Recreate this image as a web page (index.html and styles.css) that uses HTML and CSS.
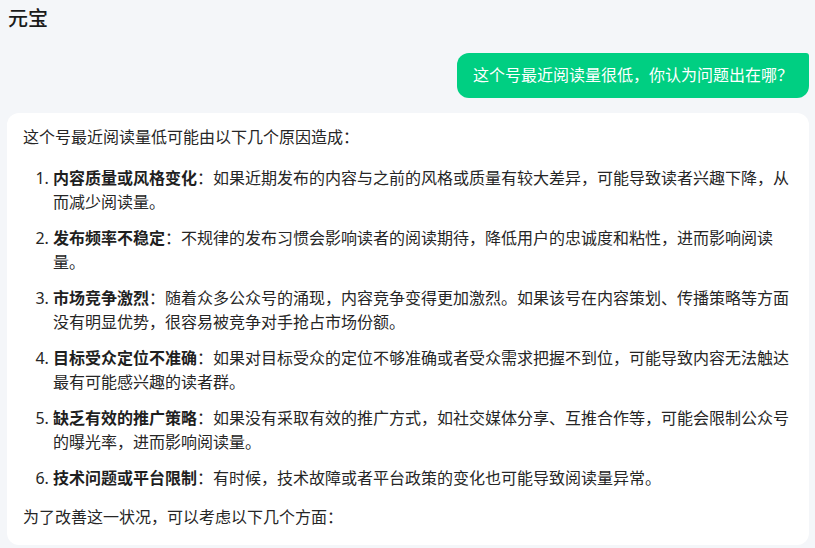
FILE: index.html
```html
<!DOCTYPE html>
<html lang="zh-CN">
<head>
<meta charset="UTF-8" />
<meta name="viewport" content="width=device-width, initial-scale=1" />
<title>元宝</title>
<link rel="stylesheet" href="styles.css">
</head>
<body>

<!-- Header -->
<div class="topBar">元宝</div>

<!-- Chat -->
<div class="chat">
  <div class="userRow">
    <div class="userBubble">这个号最近阅读量很低，你认为问题出在哪？</div>
  </div>

  <div class="answerCard">
    <p>这个号最近阅读量低可能由以下几个原因造成：</p>
    <ol class="reasons">
      <li><strong>内容质量或风格变化</strong>：如果近期发布的内容与之前的风格或质量有较大差异，可能导致读者兴趣下降，从而减少阅读量。</li>
      <li><strong>发布频率不稳定</strong>：不规律的发布习惯会影响读者的阅读期待，降低用户的忠诚度和粘性，进而影响阅读量。</li>
      <li><strong>市场竞争激烈</strong>：随着众多公众号的涌现，内容竞争变得更加激烈。如果该号在内容策划、传播策略等方面没有明显优势，很容易被竞争对手抢占市场份额。</li>
      <li><strong>目标受众定位不准确</strong>：如果对目标受众的定位不够准确或者受众需求把握不到位，可能导致内容无法触达最有可能感兴趣的读者群。</li>
      <li><strong>缺乏有效的推广策略</strong>：如果没有采取有效的推广方式，如社交媒体分享、互推合作等，可能会限制公众号的曝光率，进而影响阅读量。</li>
      <li><strong>技术问题或平台限制</strong>：有时候，技术故障或者平台政策的变化也可能导致阅读量异常。</li>
    </ol>
    <p>为了改善这一状况，可以考虑以下几个方面：</p>
  </div>
</div>

</body>
</html>
```

FILE: styles.css
```css
body {
  margin: 0;
  background: #f4f6f9;
  color: #262626;
  font-family: "Noto Sans", "Noto Sans CJK SC", sans-serif;
  overflow: hidden;
}

/* Header */
.topBar {
  padding: 8px 8px 0 8px;
  font-size: 20px;
  line-height: 22px;
  font-weight: 500;
  color: #1a1a1a;
}

/* Chat area */
.chat {
  padding: 0 6px 0 7px;
}
.userRow {
  display: flex;
  justify-content: flex-end;
  margin-top: 23px;
}
.userBubble {
  background: #00cf82;
  color: white;
  font-size: 16px;
  line-height: 25px;
  padding: 10px 16px;
  border-radius: 12px 3px 12px 12px;
}

/* Answer card */
.answerCard {
  background: white;
  margin-top: 15px;
  border-radius: 12px;
  padding: 12px 16px 16px 16px;
  font-size: 16px;
  line-height: 24px;
}
.answerCard p {
  margin: 0;
}
.answerCard strong {
  font-weight: 600;
  color: #1f1f1f;
}
.reasons {
  margin: 17px 0 15px 0;
  padding-left: 30px;
}
.reasons li {
  margin-bottom: 12px;
}
.reasons li:last-child {
  margin-bottom: 0;
}
```
